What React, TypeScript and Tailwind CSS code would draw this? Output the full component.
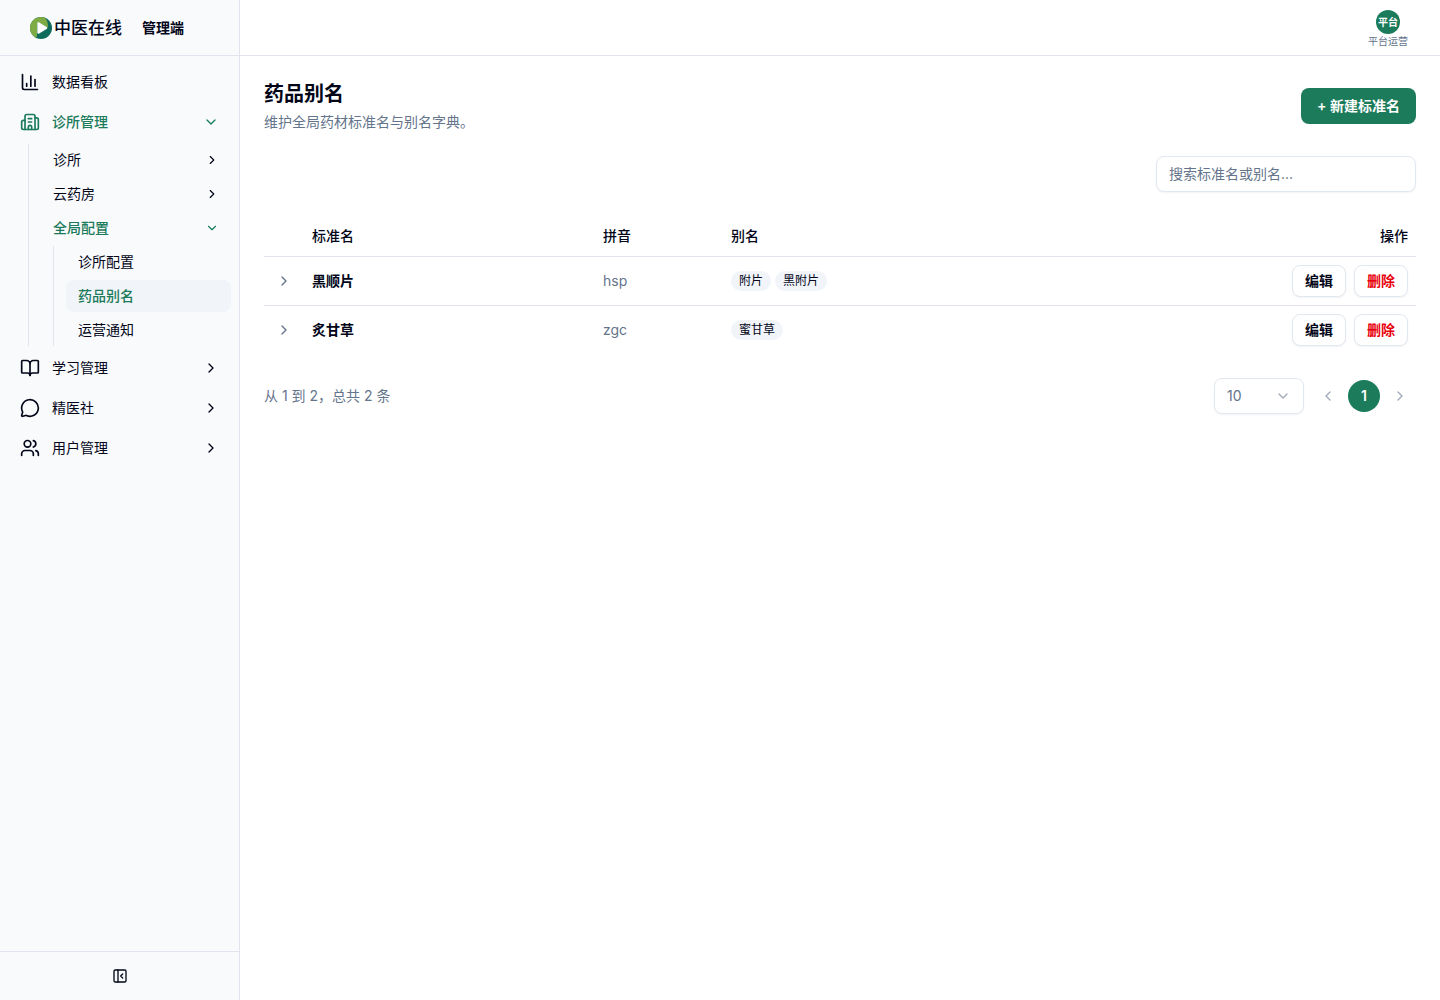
import { useState } from "react";
import type { ReactNode } from "react";
import {
  BookOpen,
  Building2,
  ChartColumn,
  ChevronDown,
  ChevronLeft,
  ChevronRight,
  MessageCircle,
  PanelLeftClose,
  Users,
} from "lucide-react";

type Medicine = { name: string; pinyin: string; aliases: string[] };

const medicines: Medicine[] = [
  { name: "黑顺片", pinyin: "hsp", aliases: ["附片", "黑附片"] },
  { name: "炙甘草", pinyin: "zgc", aliases: ["蜜甘草"] },
];

function Logo() {
  return (
    <div className="flex items-center gap-0.5">
      <svg viewBox="0 0 22 22" className="size-[22px]" aria-hidden="true">
        <circle cx="11" cy="11" r="11" fill="#0f6b5b" />
        <path
          d="M11 0A11 11 0 0 0 0 11c0 4 2 7.300 5 9.200C6.500 21 7.200 19.500 7 17.500V6.500L14 8.500 17.500 11C18.500 8 17.500 3 14.500 .6A11 11 0 0 0 11 0Z"
          fill="#7fab45"
        />
        <path
          d="M7.300 6.600c0-1 1-1.600 1.900-1.100l7.400 4.500c.8.500.8 1.600 0 2.100l-7.400 4.500c-.9.500-1.900-.1-1.900-1.100Z"
          fill="#fff"
        />
      </svg>
      <span className="text-[17px] leading-6 font-medium">中医在线</span>
    </div>
  );
}

function NavItem({
  icon,
  label,
  open,
  leaf,
}: {
  icon: ReactNode;
  label: string;
  open?: boolean;
  leaf?: boolean;
}) {
  return (
    <button
      type="button"
      aria-expanded={leaf ? undefined : !!open}
      className={`flex h-9 w-full items-center gap-3 rounded-lg px-3 text-left text-sm ${
        open ? "font-medium text-[#1b7b5a]" : ""
      }`}
    >
      {icon}
      <span className="flex-1">{label}</span>
      {!leaf && (open ? <ChevronDown className="size-4" /> : <ChevronRight className="size-4" />)}
    </button>
  );
}

function SubItem({ label, open }: { label: string; open?: boolean }) {
  return (
    <button
      type="button"
      aria-expanded={!!open}
      className={`flex h-8 w-full items-center justify-between rounded-lg px-3 text-left text-sm ${
        open ? "font-medium text-[#1b7b5a]" : ""
      }`}
    >
      {label}
      {open ? <ChevronDown className="size-3.5" /> : <ChevronRight className="size-3.5" />}
    </button>
  );
}

function LeafLink({ label, active }: { label: string; active?: boolean }) {
  return (
    <a
      href="#"
      aria-current={active ? "page" : undefined}
      className={`flex h-8 items-center rounded-lg px-3 text-sm ${
        active ? "bg-[#f1f4f9] font-medium text-[#1b7b5a]" : ""
      }`}
    >
      {label}
    </a>
  );
}

function Sidebar() {
  return (
    <aside className="flex w-60 shrink-0 flex-col border-r border-[#e2e4ed] bg-[#f9fafc]">
      <div className="flex h-14 items-center gap-5 border-b border-[#e2e4ed] pl-[30px]">
        <Logo />
        <span className="text-sm font-semibold">管理端</span>
      </div>
      <nav className="flex flex-1 flex-col gap-1 p-2">
        <NavItem icon={<ChartColumn className="size-5" />} label="数据看板" leaf />
        <NavItem icon={<Building2 className="size-5" />} label="诊所管理" open />
        <div className="ml-5 flex flex-col gap-0.5 border-l border-[#e2e4ed] pl-3">
          <SubItem label="诊所" />
          <SubItem label="云药房" />
          <SubItem label="全局配置" open />
          <div className="ml-3 flex flex-col gap-0.5 border-l border-[#e2e4ed] pl-3">
            <LeafLink label="诊所配置" />
            <LeafLink label="药品别名" active />
            <LeafLink label="运营通知" />
          </div>
        </div>
        <NavItem icon={<BookOpen className="size-5" />} label="学习管理" />
        <NavItem icon={<MessageCircle className="size-5" />} label="精医社" />
        <NavItem icon={<Users className="size-5" />} label="用户管理" />
      </nav>
      <div className="flex justify-center border-t border-[#e2e4ed] p-2">
        <button type="button" aria-label="收起侧边栏" className="flex size-8 items-center justify-center">
          <PanelLeftClose className="size-4" />
        </button>
      </div>
    </aside>
  );
}

function MedicineTable() {
  return (
    <table className="w-full table-fixed text-left text-sm">
      <thead>
        <tr className="h-10 border-b border-[#e2e4ed]">
          <th className="w-10" />
          <th className="w-[291px] px-2 font-medium">标准名</th>
          <th className="w-32 px-2 font-medium">拼音</th>
          <th className="px-2 font-medium">别名</th>
          <th className="w-40 px-2 text-right font-medium">操作</th>
        </tr>
      </thead>
      <tbody>
        {medicines.map((m) => (
          <tr key={m.name} className="border-b border-[#e2e4ed] last:border-0">
            <td className="p-2">
              <button
                type="button"
                aria-label={`展开${m.name}`}
                className="flex size-6 items-center justify-center text-[#64748b]"
              >
                <ChevronRight className="size-4" />
              </button>
            </td>
            <td className="p-2 font-semibold">{m.name}</td>
            <td className="p-2 text-[#64748b]">{m.pinyin}</td>
            <td className="p-2">
              <div className="flex gap-1">
                {m.aliases.map((a) => (
                  <span key={a} className="rounded-full bg-[#f1f4f9] px-2 py-0.5 text-xs">
                    {a}
                  </span>
                ))}
              </div>
            </td>
            <td className="p-2">
              <div className="flex justify-end gap-2">
                <button
                  type="button"
                  className="h-8 rounded-lg border border-[#e2e8f0] bg-white px-3 font-semibold shadow-xs"
                >
                  编辑
                </button>
                <button
                  type="button"
                  className="h-8 rounded-lg border border-[#e2e8f0] bg-white px-3 font-semibold text-[#e7000b] shadow-xs"
                >
                  删除
                </button>
              </div>
            </td>
          </tr>
        ))}
      </tbody>
    </table>
  );
}

function Pagination() {
  const [size, setSize] = useState("10");
  return (
    <div className="mt-6 flex items-center justify-between text-sm text-[#64748b]">
      <p>从 1 到 2，总共 2 条</p>
      <div className="flex items-center gap-2">
        <div className="relative">
          <select
            aria-label="每页条数"
            value={size}
            onChange={(e) => setSize(e.target.value)}
            className="block h-9 w-[90px] appearance-none rounded-lg border border-[#e2e8f0] bg-white px-3 shadow-xs"
          >
            <option>10</option>
            <option>20</option>
            <option>50</option>
          </select>
          <ChevronDown className="pointer-events-none absolute top-2.5 right-[13px] size-4 opacity-60" />
        </div>
        <div className="flex items-center gap-1">
          <button
            type="button"
            disabled
            aria-label="上一页"
            className="flex size-8 items-center justify-center opacity-60"
          >
            <ChevronLeft className="size-4" />
          </button>
          <button
            type="button"
            aria-current="page"
            className="size-8 rounded-full bg-[#1b7b5a] font-semibold text-white"
          >
            1
          </button>
          <button
            type="button"
            disabled
            aria-label="下一页"
            className="flex size-8 items-center justify-center opacity-60"
          >
            <ChevronRight className="size-4" />
          </button>
        </div>
      </div>
    </div>
  );
}

export default function App() {
  return (
    <div className="flex min-h-screen bg-white font-[Inter,'Noto_Sans_CJK_SC',sans-serif] text-[#020618]">
      <Sidebar />
      <div className="flex min-w-0 flex-1 flex-col">
        <header className="flex h-14 items-center justify-end border-b border-[#e2e4ed] px-6">
          <button type="button" className="flex flex-col items-center gap-px px-2 pt-0.5">
            <span className="flex size-6 items-center justify-center rounded-full bg-[#1b7b5a] text-[10px] font-semibold text-white">
              平台
            </span>
            <span className="text-[10px] leading-3 text-[#64748b]">平台运营</span>
          </button>
        </header>
        <main className="flex-1 p-6">
          <div className="flex items-center justify-between">
            <div className="flex flex-col gap-1">
              <h1 className="text-xl leading-7 font-semibold">药品别名</h1>
              <p className="text-sm text-[#64748b]">维护全局药材标准名与别名字典。</p>
            </div>
            <button
              type="button"
              className="h-9 rounded-lg bg-[#1b7b5a] px-4 text-sm font-semibold text-white"
            >
              + 新建标准名
            </button>
          </div>
          <div className="my-6 flex justify-end">
            <input
              type="search"
              aria-label="搜索标准名或别名"
              placeholder="搜索标准名或别名..."
              className="h-9 w-[260px] rounded-lg border border-[#e2e8f0] bg-white px-3 pb-0.5 text-sm shadow-xs placeholder:text-[#64748b]"
            />
          </div>
          <MedicineTable />
          <Pagination />
        </main>
      </div>
    </div>
  );
}
